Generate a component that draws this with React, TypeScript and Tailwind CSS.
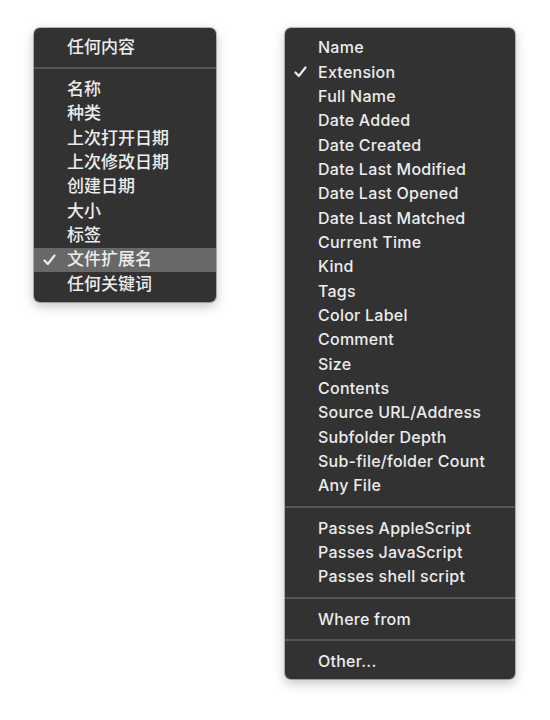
import React from "react";

type Item = { label: string; checked?: boolean; highlight?: boolean } | "sep";

const left: Item[] = [
  { label: "任何内容" },
  "sep",
  { label: "名称" },
  { label: "种类" },
  { label: "上次打开日期" },
  { label: "上次修改日期" },
  { label: "创建日期" },
  { label: "大小" },
  { label: "标签" },
  { label: "文件扩展名", checked: true, highlight: true },
  { label: "任何关键词" },
];

const right: Item[] = [
  { label: "Name" },
  { label: "Extension", checked: true },
  { label: "Full Name" },
  { label: "Date Added" },
  { label: "Date Created" },
  { label: "Date Last Modified" },
  { label: "Date Last Opened" },
  { label: "Date Last Matched" },
  { label: "Current Time" },
  { label: "Kind" },
  { label: "Tags" },
  { label: "Color Label" },
  { label: "Comment" },
  { label: "Size" },
  { label: "Contents" },
  { label: "Source URL/Address" },
  { label: "Subfolder Depth" },
  { label: "Sub-file/folder Count" },
  { label: "Any File" },
  "sep",
  { label: "Passes AppleScript" },
  { label: "Passes JavaScript" },
  { label: "Passes shell script" },
  "sep",
  { label: "Where from" },
  "sep",
  { label: "Other..." },
];

function Check() {
  return (
    <svg width="13" height="12" viewBox="0 0 13 12" className="absolute left-[9px] top-1/2 -translate-y-1/2">
      <path d="M1.5 6.5 L4.8 10 L11.5 1.5" fill="none" stroke="#ececec" strokeWidth="2.2" strokeLinecap="round" strokeLinejoin="round" />
    </svg>
  );
}

function Menu({ items, width, text }: { items: Item[]; width: string; text: string }) {
  return (
    <div
      className={`${width} rounded-[6px] bg-[#323232] pt-[7px] pb-[6px] shadow-[0_0_0_1px_rgba(0,0,0,0.25),0_4px_12px_rgba(0,0,0,0.25)]`}
    >
      {items.map((it, i) =>
        it === "sep" ? (
          <div key={i} className="py-[8px]">
            <div className="h-[2px] bg-[#565656]" />
          </div>
        ) : (
          <div
            key={i}
            className={`relative flex h-[24.35px] items-center pl-[33px] ${text} font-medium text-[#ececec] ${
              it.highlight ? "bg-[#686868]" : ""
            }`}
          >
            {it.checked && <Check />}
            <span className="whitespace-nowrap leading-none">{it.label}</span>
          </div>
        )
      )}
    </div>
  );
}

export default function App() {
  return (
    <div
      className="flex min-h-[720px] w-[550px] items-start gap-[69px] bg-white pl-[34px] pt-[28px]"
      style={{ fontFamily: 'Inter, "Noto Sans CJK SC", sans-serif' }}
    >
      <Menu items={left} width="w-[182px]" text="text-[17px]" />
      <Menu items={right} width="w-[230px]" text="text-[16px] tracking-[0.25px]" />
    </div>
  );
}
